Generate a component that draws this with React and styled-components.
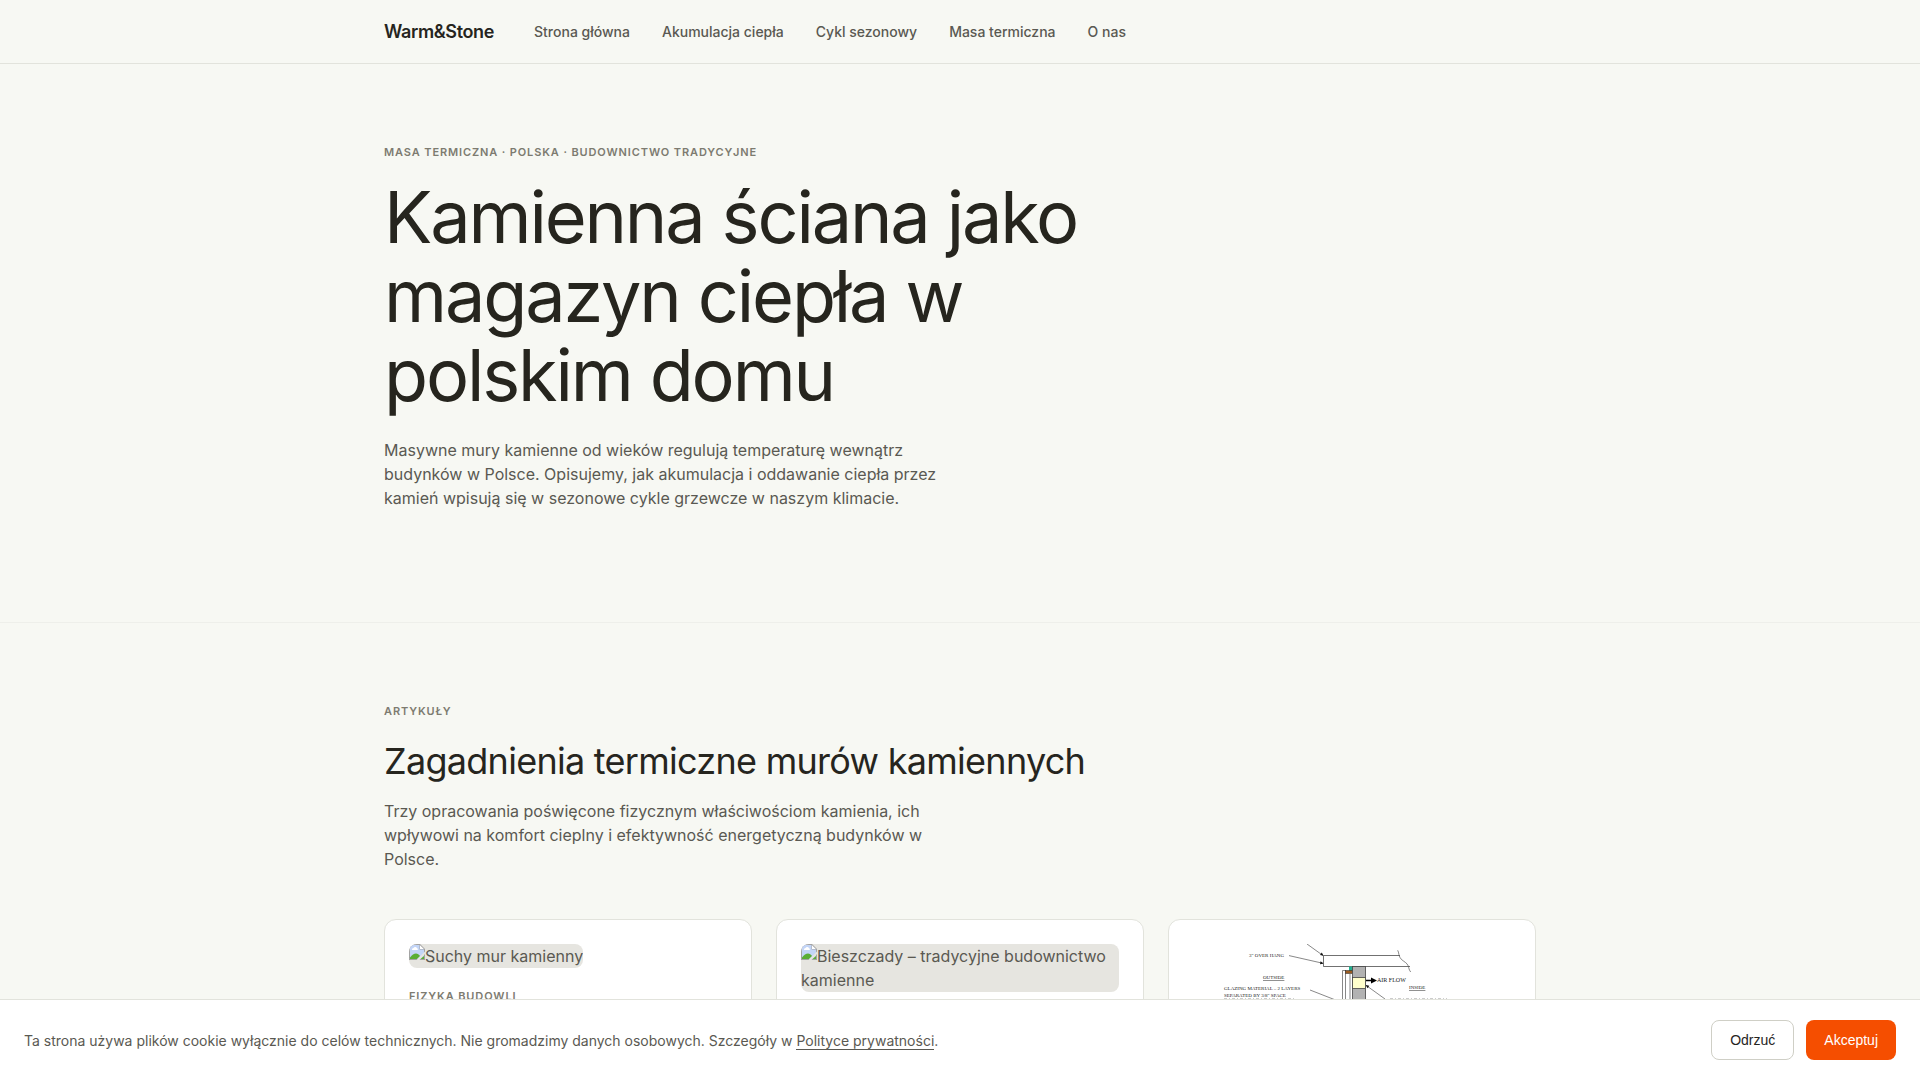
import React from "react";
import styled, { createGlobalStyle } from "styled-components";

const c = {
  page: "#f7f8f3",
  ink: "#26251e",
  body: "#5a5952",
  muted: "#7d7b70",
  line: "#e2e3dc",
  faint: "#eeefea",
  accent: "#f54e00",
};

const GlobalStyle = createGlobalStyle`
  *, *::before, *::after { box-sizing: border-box; }
  body {
    margin: 0;
    background: ${c.page};
    color: ${c.body};
    font-family: Inter, "Liberation Sans", sans-serif;
    font-size: 16px;
    line-height: 24px;
  }
  h1, h2, p, ul { margin: 0; padding: 0; font-weight: 400; }
`;

const Container = styled.div`
  max-width: 1200px;
  margin: 0 auto;
  padding: 0 24px;
`;

const Header = styled.header`
  border-bottom: 1px solid ${c.line};
`;

const HeaderRow = styled(Container)`
  display: flex;
  align-items: center;
  gap: 40px;
  height: 63px;
`;

const Logo = styled.a`
  color: ${c.ink};
  font-size: 18px;
  font-weight: 600;
  letter-spacing: -0.02em;
  text-decoration: none;
`;

const NavList = styled.ul`
  display: flex;
  gap: 32px;
  list-style: none;
  font-size: 14px;
  font-weight: 500;
`;

const NavLink = styled.a`
  color: ${c.body};
  text-decoration: none;
`;

const Hero = styled.section`
  padding: 80px 0 112px;
  border-bottom: 1px solid ${c.faint};
`;

const Eyebrow = styled.p`
  margin-bottom: ${(p) => p.$space}px;
  color: ${c.muted};
  font-size: 11px;
  line-height: 17px;
  font-weight: 600;
  letter-spacing: 0.08em;
  text-transform: uppercase;
`;

const Title = styled.h1`
  max-width: 800px;
  margin-bottom: 24px;
  color: ${c.ink};
  font-size: 72px;
  line-height: 79px;
  letter-spacing: -0.03em;
`;

const SectionTitle = styled.h2`
  margin-bottom: 16px;
  color: ${c.ink};
  font-size: 36px;
  line-height: 43px;
  letter-spacing: -0.02em;
`;

const Lead = styled.p`
  max-width: 560px;
`;

const Articles = styled.section`
  padding-top: 80px;
`;

const CardGrid = styled.div`
  display: grid;
  grid-template-columns: repeat(3, 1fr);
  gap: 24px;
  margin-top: 48px;
`;

const Card = styled.article`
  padding: 24px;
  background: #fff;
  border: 1px solid ${c.line};
  border-radius: 12px;
`;

const Missing = styled.div`
  width: fit-content;
  max-width: 100%;
  margin-bottom: 20px;
  overflow: hidden;
  background: #e6e5e0;
  border-radius: 8px;
`;

const MissingGlyph = styled.svg`
  float: left;
  width: 16px;
  height: 16px;
`;

const Figure = styled.svg`
  display: block;
  width: 100%;
  height: auto;
  border-radius: 8px;
  font-family: "Liberation Serif", serif;
  font-size: 5px;
`;

const CookieBar = styled.aside`
  position: fixed;
  inset: auto 0 0 0;
  display: flex;
  align-items: center;
  justify-content: space-between;
  gap: 24px;
  padding: 20px 24px;
  background: #fff;
  border-top: 1px solid ${c.line};
  font-size: 14px;
  line-height: 21px;
`;

const PolicyLink = styled.a`
  color: inherit;
  text-decoration: none;
  border-bottom: 1px solid ${c.body};
`;

const Actions = styled.div`
  display: flex;
  gap: 12px;
`;

const Button = styled.button`
  height: 40px;
  padding: 0 18px;
  color: ${(p) => (p.$primary ? "#fff" : c.ink)};
  background: ${(p) => (p.$primary ? c.accent : "#fff")};
  border: ${(p) => (p.$primary ? "none" : "1px solid #cfcfc6")};
  border-radius: 8px;
  font-family: "Liberation Sans", sans-serif;
  font-size: 14px;
`;

function MissingImage({ alt }) {
  return (
    <Missing>
      <MissingGlyph viewBox="0 0 16 16" aria-hidden="true">
        <path d="M0 0H11L16 5V16H0Z" fill="#a3a3a3" />
        <path d="M1 1H10.5V5.5H15V15H1Z" fill="#c3d5f7" />
        <path d="M11 1.2V5H14.8Z" fill="#fff" />
        <path d="M3 5.5a1.5 1.5 0 0 1 1.5-1.5a2 2 0 0 1 3.5 .2a1 1 0 0 1 .5 1.8H3Z" fill="#fff" />
        <path d="M1 15V13.5C3 11 5 9.500 7 9.500C8.500 9.500 10 10.500 11 12L8 15Z" fill="#5aae35" />
        <path d="M16 7.500V10L10.500 16H7.500Z" fill="#e6e5e0" />
        <path d="M11.500 15L15 12V15Z" fill="#5aae35" />
      </MissingGlyph>
      {alt}
    </Missing>
  );
}

function WallDiagram() {
  return (
    <Figure viewBox="0 0 318 96" role="img" fill="#222">
      <rect width="318" height="96" fill="#fff" />
      <g fill="none" stroke="#555" strokeWidth=".7">
        <path d="M114 0L130 11.500M96 11.600L130 19.300" />
        <path d="M207 11.500H130.500V22.500H217" stroke="#333" />
        <path d="M204.700 6.300C206 8 205.500 13 208.500 15.500S214 19 215 21.500S216 26 217.700 28" />
        <path d="M117 46L140 55L152 60M173 41.300L192 55" />
        <path d="M149.500 96V26.500H152.500V96M157 30V96" />
      </g>
      <path d="M130.500 11.700L127 11L128.800 8.500ZM130.500 19.500L127 20.300L127.600 17.200ZM172.700 41L176.300 41.800L174.500 44.300Z" fill="#111" />
      <rect x="156" y="22.500" width="4" height="4.500" fill="#20b090" />
      <rect x="152.500" y="26.500" width="7" height="3" fill="#9a5a20" stroke="#222" strokeWidth=".5" />
      <g stroke="#444" strokeWidth=".8">
        <rect x="159.500" y="22.500" width="13" height="73" fill="#b2b2b2" />
        <rect x="159.500" y="33.500" width="13" height="11" fill="#ffffcc" />
      </g>
      <path d="M173 35.800H178V33.500L184 36.500L178 39.500V37.200H173Z" fill="#000" />
      <text x="56" y="13">3" OVER HANG</text>
      <text x="70" y="35" textDecoration="underline">OUTSIDE</text>
      <text x="31" y="46">GLAZING MATERIAL – 2 LAYERS</text>
      <text x="31" y="53">SEPARATED BY 3/8" SPACE</text>
      <text x="184" y="38" fontSize="6">AIR FLOW</text>
      <text x="216" y="45" textDecoration="underline">INSIDE</text>
      <path d="M31 55H103M197 55H254" stroke="#999" strokeWidth="1" strokeDasharray="3 2 1 2" />
    </Figure>
  );
}

const links = ["Strona główna", "Akumulacja ciepła", "Cykl sezonowy", "Masa termiczna", "O nas"];

export default function App() {
  return (
    <>
      <GlobalStyle />
      <Header>
        <HeaderRow>
          <Logo href="#">Warm&amp;Stone</Logo>
          <nav>
            <NavList>
              {links.map((label) => (
                <li key={label}>
                  <NavLink href="#">{label}</NavLink>
                </li>
              ))}
            </NavList>
          </nav>
        </HeaderRow>
      </Header>
      <main>
        <Hero>
          <Container>
            <Eyebrow $space={16}>Masa termiczna · Polska · Budownictwo tradycyjne</Eyebrow>
            <Title>Kamienna ściana jako magazyn ciepła w polskim domu</Title>
            <Lead>
              Masywne mury kamienne od wieków regulują temperaturę wewnątrz budynków w Polsce.
              Opisujemy, jak akumulacja i oddawanie ciepła przez kamień wpisują się w sezonowe
              cykle grzewcze w naszym klimacie.
            </Lead>
          </Container>
        </Hero>
        <Articles>
          <Container>
            <Eyebrow $space={20}>Artykuły</Eyebrow>
            <SectionTitle>Zagadnienia termiczne murów kamiennych</SectionTitle>
            <Lead>
              Trzy opracowania poświęcone fizycznym właściwościom kamienia, ich wpływowi na
              komfort cieplny i efektywność energetyczną budynków w Polsce.
            </Lead>
            <CardGrid>
              <Card>
                <MissingImage alt="Suchy mur kamienny" />
                <Eyebrow $space={12}>Fizyka budowli</Eyebrow>
              </Card>
              <Card>
                <MissingImage alt="Bieszczady – tradycyjne budownictwo kamienne" />
              </Card>
              <Card>
                <WallDiagram />
              </Card>
            </CardGrid>
          </Container>
        </Articles>
      </main>
      <CookieBar>
        <p>
          Ta strona używa plików cookie wyłącznie do celów technicznych. Nie gromadzimy danych
          osobowych. Szczegóły w <PolicyLink href="#">Polityce prywatności</PolicyLink>.
        </p>
        <Actions>
          <Button type="button">Odrzuć</Button>
          <Button type="button" $primary>Akceptuj</Button>
        </Actions>
      </CookieBar>
    </>
  );
}
